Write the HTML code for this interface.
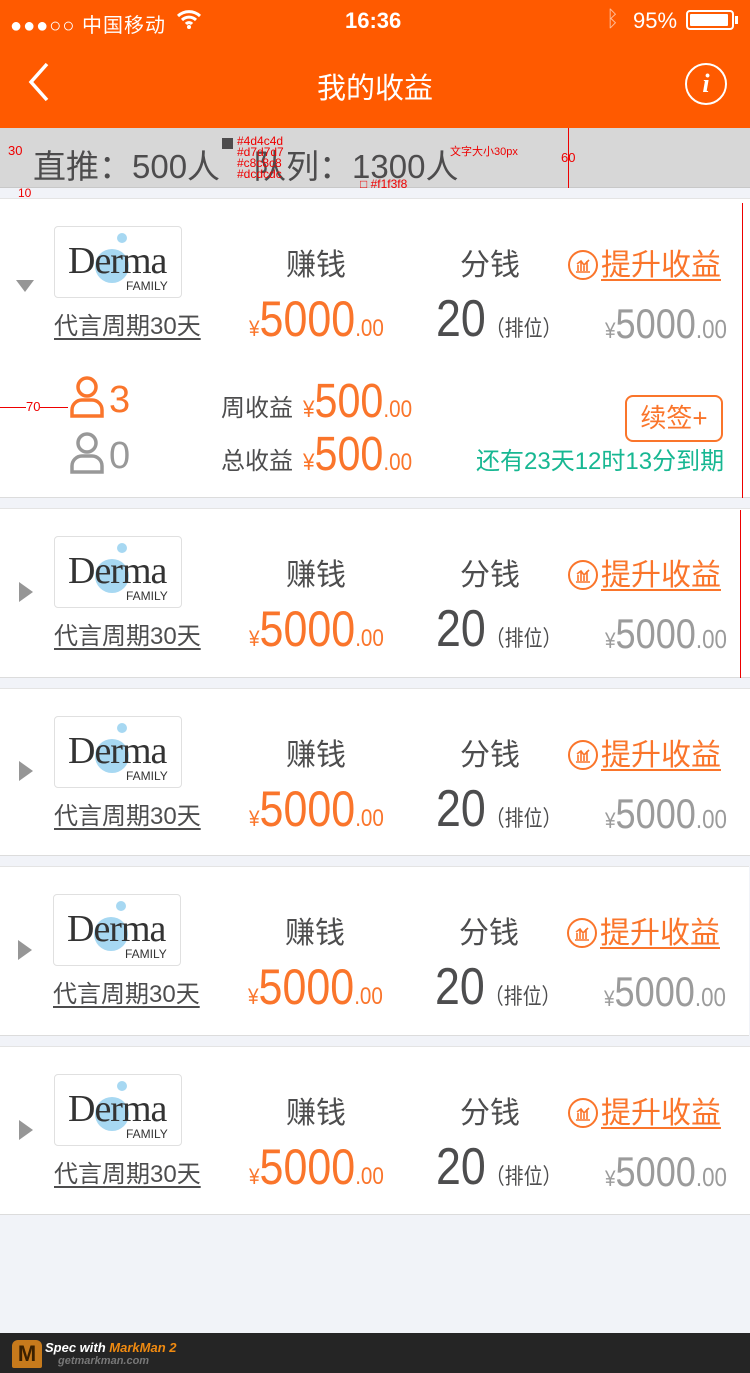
<!DOCTYPE html>
<html><head><meta charset="utf-8">
<style>
*{margin:0;padding:0;box-sizing:border-box}
body{width:750px;height:1373px;background:#f1f3f8;position:relative;overflow:hidden;font-family:"Liberation Sans","Noto Sans CJK SC",sans-serif;color:#4d4d4e}
.a{position:absolute;white-space:nowrap}
.top{position:absolute;left:0;top:0;width:750px;height:128px;background:#ff5a00}
.bar{position:absolute;left:0;top:128px;width:750px;height:60px;background:#d7d7d7;border-bottom:1px solid #c8c8c8}
.card{position:absolute;left:0;width:750px;background:#fff;border-bottom:1px solid #dcdcdc;border-top:1px solid #e4e4e4}
.logo{position:absolute;left:54px;top:28px;width:128px;height:72px;border:1px solid #e0e0e0;border-radius:4px;background:#fff;overflow:hidden}
.u{text-decoration:underline;text-decoration-thickness:2px;text-underline-offset:4px}
.or{color:#fa752b}
.gr{color:#9b9b9b}
.sx{transform:scaleX(.86);transform-origin:0 0}
</style></head><body>
<div class="top"></div>
<div class="a" style="left:10px;top:9px;font-size:20px;color:#fff;letter-spacing:1px">●●●○○ 中国移动</div>
<svg class="a" style="left:176px;top:9px" width="26" height="20" viewBox="0 0 26 20"><path d="M2 7a16 16 0 0 1 22 0M6 11a10 10 0 0 1 14 0M10 15a4 4 0 0 1 6 0" stroke="#fff" stroke-width="3" fill="none"/><circle cx="13" cy="18" r="2" fill="#fff"/></svg>
<div class="a" style="left:345px;top:8px;font-size:22px;font-weight:bold;color:#fff">16:36</div>
<div class="a" style="left:606px;top:6px;font-size:22px;color:#fff;opacity:.6">ᛒ</div>
<div class="a" style="left:633px;top:8px;font-size:22px;color:#fff">95%</div>
<div class="a" style="left:686px;top:10px;width:48px;height:20px;border:2px solid #fff;border-radius:4px;padding:2px"><div style="width:38px;height:12px;background:#fff;border-radius:1px"></div></div>
<div class="a" style="left:735px;top:16px;width:3px;height:8px;background:#fff"></div>
<svg class="a" style="left:26px;top:62px" width="26" height="40" viewBox="0 0 26 40"><path d="M21 2L5 20l16 18" stroke="#fff" stroke-width="3.5" fill="none"/></svg>
<div class="a" style="left:0;width:750px;text-align:center;top:65px;font-size:29px;color:#fff">我的收益</div>
<div class="a" style="left:685px;top:63px;width:42px;height:42px;border:2.5px solid #fff;border-radius:50%;color:#fff;font:italic bold 26px 'Liberation Serif',serif;text-align:center;line-height:38px">i</div>
<div class="bar"></div>
<div class="a" style="left:33px;top:140px;font-size:33px;color:#4d4c4d">直推：500人　队列：1300人</div>
<div class="a" style="left:8px;top:143px;font-size:13px;color:#e00">30</div>
<div class="a" style="left:561px;top:150px;font-size:13px;color:#e00">60</div>
<div class="a" style="left:568px;top:128px;width:1px;height:60px;background:#e00"></div>
<div class="a" style="left:450px;top:143px;font-size:11px;color:#e00">文字大小30px</div>
<div class="a" style="left:222px;top:138px;width:11px;height:11px;background:#4d4c4d"></div>
<div class="a" style="left:237px;top:136px;font-size:12px;color:#e00;line-height:11px">#4d4c4d<br>#d7d7d7<br>#c8c8c8<br>#dcdcdc</div>
<div class="a" style="left:360px;top:177px;font-size:12px;color:#e00">□ #f1f3f8</div>
<div class="a" style="left:18px;top:186px;font-size:12px;color:#e00">10</div>

<div id="cards"></div>
<script>
function card(T,h,left,tri){
return `<div class="card" style="top:${T}px;height:${h}px;left:${left}px"></div>
<div class="a" style="top:${T}px;left:${left}px;width:750px;height:${h}px">
${tri=='down'?'<div class="a" style="left:16px;top:82px;width:0;height:0;border-left:9px solid transparent;border-right:9px solid transparent;border-top:12px solid #969696"></div>':'<div class="a" style="left:19px;top:'+(h/2-11)+'px;width:0;height:0;border-top:10px solid transparent;border-bottom:10px solid transparent;border-left:14px solid #969696"></div>'}
<div class="logo"><div class="a" style="left:40px;top:22px;width:34px;height:34px;border-radius:50%;background:#a7d8f2"></div><div class="a" style="left:62px;top:6px;width:10px;height:10px;border-radius:50%;background:#a7d8f2"></div>
<div class="a" style="left:13px;top:12px;font:38px 'Liberation Serif',serif;color:#333;letter-spacing:-1px">Derma</div>
<div class="a" style="left:71px;top:52px;font-size:12px;color:#333">FAMILY</div></div>
<div class="a u" style="left:54px;top:108px;font-size:24px;color:#4d4d4e">代言周期30天</div>
<div class="a" style="left:286px;top:42px;font-size:30px">赚钱</div>
<div class="a" style="left:460px;top:42px;font-size:30px">分钱</div>
<div class="a" style="left:568px;top:52px;width:30px;height:30px;border:2px solid #fa752b;border-radius:50%"><svg class="a" style="left:5px;top:5px" width="16" height="16" viewBox="0 0 16 16"><path d="M1 15h14M3 14V8M6 14V5M9 14V9M12 14V4M2 7l4-3 3 4 5-5" stroke="#fa752b" stroke-width="1.6" fill="none"/></svg></div>
<div class="a or u" style="left:601px;top:42px;font-size:30px">提升收益</div>
<div class="a or sx" style="left:249px;top:96px;font-size:50px;line-height:50px"><span style="font-size:22px">¥</span>5000<span style="font-size:24px">.00</span></div>
<div class="a sx" style="left:436px;top:96px;font-size:52px;line-height:50px">20<span style="font-size:22px">（排位）</span></div>
<div class="a gr sx" style="left:605px;top:106px;font-size:42px;line-height:40px"><span style="font-size:22px">¥</span>5000<span style="font-size:26px">.00</span></div>
</div>`;}
var h=card(198,300,0,'down')+card(508,170,0,'r')+card(688,168,0,'r')+card(866,170,-1,'r')+card(1046,169,0,'r');
document.getElementById('cards').innerHTML=h;
</script>
<svg class="a" style="left:70px;top:376px" width="34" height="42" viewBox="0 0 34 42"><circle cx="17" cy="11" r="9" stroke="#fa752b" stroke-width="3.5" fill="none"/><path d="M2 40v-6a10 10 0 0 1 10-10h10a10 10 0 0 1 10 10v6z" stroke="#fa752b" stroke-width="3.5" fill="none"/></svg>
<div class="a or" style="left:109px;top:380px;font-size:38px;line-height:40px">3</div>
<svg class="a" style="left:70px;top:432px" width="34" height="42" viewBox="0 0 34 42"><circle cx="17" cy="11" r="9" stroke="#989898" stroke-width="3.5" fill="none"/><path d="M2 40v-6a10 10 0 0 1 10-10h10a10 10 0 0 1 10 10v6z" stroke="#989898" stroke-width="3.5" fill="none"/></svg>
<div class="a" style="left:109px;top:436px;font-size:38px;line-height:40px;color:#989898">0</div>
<div class="a" style="left:221px;top:388px;font-size:24px">周收益</div>
<div class="a or sx" style="left:303px;top:379px;font-size:48px;line-height:46px"><span style="font-size:24px">¥</span>500<span style="font-size:24px">.00</span></div>
<div class="a" style="left:221px;top:441px;font-size:24px">总收益</div>
<div class="a or sx" style="left:303px;top:432px;font-size:48px;line-height:46px"><span style="font-size:24px">¥</span>500<span style="font-size:24px">.00</span></div>
<div class="a" style="left:625px;top:395px;width:98px;height:47px;border:2px solid #fa752b;border-radius:8px;color:#fa752b;font-size:26px;text-align:center;line-height:43px">续签+</div>
<div class="a" style="left:476px;top:441px;font-size:24px;color:#17b792">还有23天12时13分到期</div>
<div class="a" style="left:742px;top:203px;width:1px;height:295px;background:#e00"></div>
<div class="a" style="left:740px;top:510px;width:1px;height:168px;background:#e00"></div>
<div class="a" style="left:0;top:407px;width:68px;height:1px;background:#e00"></div>
<div class="a" style="left:26px;top:399px;font-size:13px;color:#e00;background:#fff">70</div>
<div class="a" style="left:0;top:1333px;width:750px;height:40px;background:#252525"></div>
<div class="a" style="left:12px;top:1340px;width:30px;height:28px;background:#c77a1c;border-radius:6px 6px 2px 2px;color:#3a2000;font:bold 22px sans-serif;text-align:center;line-height:28px">M</div>
<div class="a" style="left:45px;top:1340px;font:italic bold 13px 'Liberation Sans',sans-serif;color:#fff">Spec with <span style="color:#f08a10">MarkMan 2</span></div>
<div class="a" style="left:58px;top:1355px;font:italic bold 11px 'Liberation Sans',sans-serif;color:#777">getmarkman.com</div>
</body></html>
